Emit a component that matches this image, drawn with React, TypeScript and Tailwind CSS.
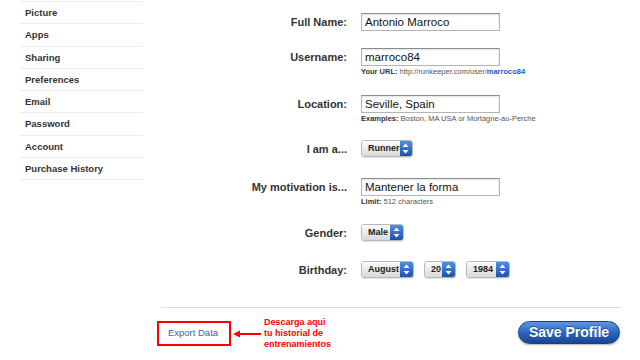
import React from "react"

const menu = ["Picture", "Apps", "Sharing", "Preferences", "Email", "Password", "Account", "Purchase History"]

function Field({ label, className, children }: { label: string; className: string; children: React.ReactNode }) {
  return (
    <div className={"flex items-start " + className}>
      <div className="w-[190px] h-[18px] flex items-center justify-end text-[11px] font-bold text-[#333]">{label}</div>
      <div className="ml-[14px]">{children}</div>
    </div>
  )
}

function TextBox({ value }: { value: string }) {
  return (
    <input
      defaultValue={value}
      className="block w-[139px] h-[18px] pl-[3px] border border-[#b4b4b4] border-t-[#8c8c8c] bg-white shadow-[inset_0_1px_2px_rgba(0,0,0,0.12)] text-[11.5px] text-[#111] outline-none"
    />
  )
}

function Select({ value, className }: { value: string; className: string }) {
  return (
    <div className={"flex h-[17px] rounded-[3px] border border-[#b9b9b9] overflow-hidden shadow-[0_1px_1px_rgba(0,0,0,0.12)] " + className}>
      <div className="flex-1 flex items-center pl-[6px] bg-linear-to-b from-[#fcfcfc] to-[#d9d9d9] text-[9px] font-bold text-[#222]">
        {value}
      </div>
      <div className="w-[13px] flex items-center justify-center bg-linear-to-b from-[#4f8fe2] to-[#1d52aa]">
        <svg width="7" height="11" viewBox="0 0 7 11">
          <polygon points="3.5,0.5 6.5,4 0.5,4" fill="#fff" />
          <polygon points="0.5,7 6.5,7 3.5,10.5" fill="#fff" />
        </svg>
      </div>
    </div>
  )
}

function Hint({ children }: { children: React.ReactNode }) {
  return <div className="mt-[1px] leading-[9px] text-[7.5px] text-[#555] whitespace-nowrap">{children}</div>
}

export default function App() {
  return (
    <div className="flex w-[640px] h-[360px] bg-white overflow-hidden font-['Liberation_Sans',Arial,sans-serif]">
      <div className="ml-[20px] w-[123px] pt-[1px]">
        <div className="border-t border-[#ececec]">
          {menu.map((m) => (
            <div key={m} className="h-[22.25px] flex items-center pl-[5px] pt-[1px] border-b border-[#ececec] text-[9.5px] font-bold text-[#333]">
              {m}
            </div>
          ))}
        </div>
      </div>

      <div className="flex-1 flex flex-col pl-[14px] pr-[20px] pt-[13px]">
        <Field label="Full Name:" className="">
          <TextBox value="Antonio Marroco" />
        </Field>
        <Field label="Username:" className="mt-[17px]">
          <TextBox value="marroco84" />
          <Hint>
            <b className="text-[#333]">Your URL:</b> http://runkeeper.com/user/<b className="text-[#2457c5]">marroco84</b>
          </Hint>
        </Field>
        <Field label="Location:" className="mt-[19px]">
          <TextBox value="Seville, Spain" />
          <Hint>
            <b className="text-[#333]">Examples:</b> Boston, MA USA or Mortagne-au-Perche
          </Hint>
        </Field>
        <Field label="I am a..." className="mt-[17px]">
          <Select value="Runner" className="w-[52px]" />
        </Field>
        <Field label="My motivation is..." className="mt-[20px]">
          <TextBox value="Mantener la forma" />
          <Hint>
            <b className="text-[#333]">Limit:</b> 512 characters
          </Hint>
        </Field>
        <Field label="Gender:" className="mt-[18px]">
          <Select value="Male" className="w-[43px]" />
        </Field>
        <Field label="Birthday:" className="mt-[19px]">
          <div className="flex gap-[10px]">
            <Select value="August" className="w-[53px]" />
            <Select value="20" className="w-[32px]" />
            <Select value="1984" className="w-[44px]" />
          </div>
        </Field>

        <div className="mt-[28px] ml-[4px] border-t border-[#dcdcdc]" />

        <div className="mt-[13px] flex items-start justify-between">
          <div className="flex items-start">
            <div className="w-[74px] h-[25px] border-2 border-[#ff0000] flex items-center justify-center pr-[2px] text-[9.5px] text-[#3461c4]">
              Export Data
            </div>
            <svg className="ml-[2px] mt-[8px]" width="28" height="10" viewBox="0 0 28 10">
              <line x1="5" y1="5" x2="28" y2="5" stroke="#ff0000" strokeWidth="2" />
              <polygon points="0,5 7,1.5 7,8.5" fill="#ff0000" />
            </svg>
            <div className="ml-[3px] -mt-[4px] text-[9px] leading-[11px] font-bold text-[#ff0000]">
              Descarga aqui
              <br />
              tu historial de
              <br />
              entrenamientos
            </div>
          </div>
          <button className="w-[102px] h-[23px] rounded-full border border-[#173f82] bg-linear-to-b from-[#5c97e4] via-[#2c66bf] to-[#1b4591] text-white text-[14px] font-bold shadow-[0_1px_2px_rgba(0,0,0,0.3)] [text-shadow:0_-1px_0_rgba(0,0,0,0.35)]">
            Save Profile
          </button>
        </div>
      </div>
    </div>
  )
}
